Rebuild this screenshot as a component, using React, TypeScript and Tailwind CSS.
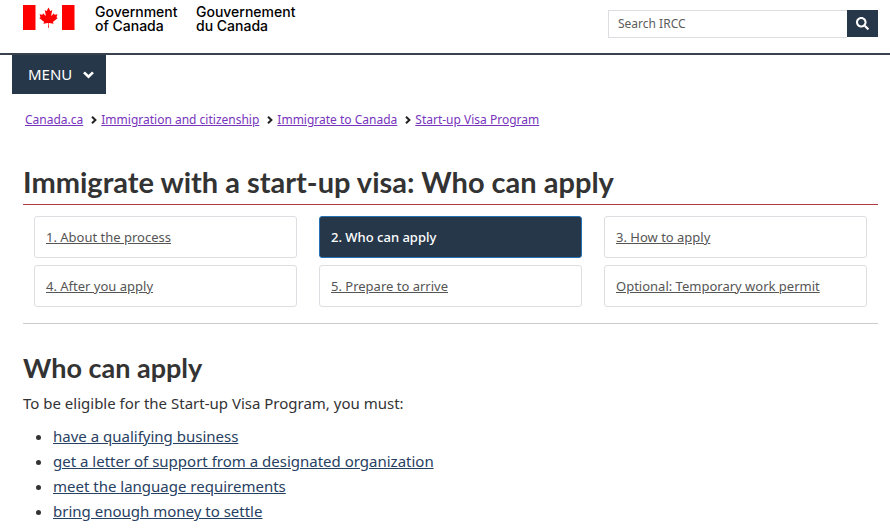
import { FaSearch } from 'react-icons/fa';

type Crumb = { label: string; href: string };
type Step = { label: string; href: string; active?: boolean };

const crumbs: Crumb[] = [
  { label: 'Canada.ca', href: '#home' },
  { label: 'Immigration and citizenship', href: '#immigration' },
  { label: 'Immigrate to Canada', href: '#immigrate' },
  { label: 'Start-up Visa Program', href: '#start-visa' },
];

const steps: Step[] = [
  { label: '1. About the process', href: '#about' },
  { label: '2. Who can apply', href: '#eligibility', active: true },
  { label: '3. How to apply', href: '#how-to-apply' },
  { label: '4. After you apply', href: '#after' },
  { label: '5. Prepare to arrive', href: '#arrive' },
  { label: 'Optional: Temporary work permit', href: '#work-permit' },
];

const requirements = [
  { label: 'have a qualifying business', href: '#business' },
  { label: 'get a letter of support from a designated organization', href: '#letter' },
  { label: 'meet the language requirements', href: '#language' },
  { label: 'bring enough money to settle', href: '#money' },
];

function Flag() {
  return (
    <svg width="52" height="25" viewBox="0 0 52 25" aria-hidden="true" className="shrink-0">
      <path fill="#f00" d="M0 0h12.5v25H0zM39 0h12.5v25H39z" />
      <path
        fill="#f00"
        transform="translate(25.5 12.6) scale(.005)"
        d="m-90 2030 45-863a95 95 0 0 0-111-98l-859 151 116-320a65 65 0 0 0-20-73l-941-762 212-99a65 65 0 0 0 34-79l-186-572 542 115a65 65 0 0 0 73-38l105-247 423 454a65 65 0 0 0 111-57l-204-1052 327 189a65 65 0 0 0 91-27l332-652 332 652a65 65 0 0 0 91 27l327-189-204 1052a65 65 0 0 0 111 57l423-454 105 247a65 65 0 0 0 73 38l542-115-186 572a65 65 0 0 0 34 79l212 99-941 762a65 65 0 0 0-20 73l116 320-859-151a95 95 0 0 0-111 98l45 863z"
      />
    </svg>
  );
}

function Header() {
  return (
    <header className="border-b-2 border-[#38414d]">
      <div className="flex items-start justify-between pt-1 pr-3 pb-[15px] pl-[23px]">
        <a href="#home" className="flex pt-px font-['Inter',sans-serif] text-[14px] leading-[14px] font-medium text-black">
          <Flag />
          <span className="ml-5 w-[101px]">
            Government
            <br />
            of Canada
          </span>
          <span lang="fr">
            Gouvernement
            <br />
            du Canada
          </span>
        </a>
        <form role="search" className="mt-[6px] flex" onSubmit={(e) => e.preventDefault()}>
          <input
            type="search"
            aria-label="Search IRCC"
            placeholder="Search IRCC"
            className="h-7 w-[239px] border border-r-0 border-[#dcdee1] px-[9px] pb-px text-[12px] leading-5 text-[#555] outline-none placeholder:text-[#5c5c5c]"
          />
          <button
            type="submit"
            aria-label="Search"
            className="flex h-[27px] w-[31px] items-center justify-center bg-[#26374a] text-white"
          >
            <FaSearch size={13} />
          </button>
        </form>
      </div>
    </header>
  );
}

function Breadcrumbs() {
  return (
    <nav aria-label="Breadcrumbs" className="mt-4 px-[25px]">
      <ol className="flex flex-wrap text-[12px] leading-5">
        {crumbs.map((crumb, i) => (
          <li key={crumb.href} className="flex items-center">
            {i > 0 && (
              <svg width="6" height="8" viewBox="0 0 6 8" aria-hidden="true" className="mr-1 ml-2">
                <path d="M1 .8 4.4 4 1 7.2" fill="none" stroke="#222" strokeWidth="2" />
              </svg>
            )}
            <a href={crumb.href} className="text-[#7834bc] underline">
              {crumb.label}
            </a>
          </li>
        ))}
      </ol>
    </nav>
  );
}

function Steps() {
  return (
    <ul className="grid grid-cols-3 gap-x-[22px] gap-y-[7px] border-b border-[#ccc] px-[11px] pt-[11px] pb-4">
      {steps.map((step) => (
        <li key={step.href}>
          <a
            href={step.href}
            aria-current={step.active ? 'page' : undefined}
            className={`block rounded-[3px] border px-[11px] py-[10px] text-[13px] leading-5 ${
              step.active
                ? 'border-[#2572b4] bg-[#26374a] font-medium text-white'
                : 'border-[#dcdee1] text-[#555] underline'
            }`}
          >
            {step.label}
          </a>
        </li>
      ))}
    </ul>
  );
}

export default function App() {
  return (
    <div className="bg-white font-['Noto_Sans',sans-serif] text-[#333]">
      <Header />

      <div className="px-3">
        <button type="button" className="flex h-[39px] items-center bg-[#26374a] pr-3 pl-4 text-[15px] text-white">
          MENU
          <svg width="11" height="8" viewBox="0 0 11 8" aria-hidden="true" className="ml-[11px]">
            <path d="M1 1.4 5.5 5.8 10 1.4" fill="none" stroke="currentColor" strokeWidth="2.6" />
          </svg>
        </button>
      </div>

      <Breadcrumbs />

      <main className="pr-3 pl-[23px]">
        <h1 className="mt-[34px] border-b border-[#af3c43] pb-1 font-['Lato',sans-serif] text-[29px] leading-9 font-bold">
          Immigrate with a start-up visa: Who can apply
        </h1>

        <Steps />

        <h2 className="mt-7 font-['Lato',sans-serif] text-[27px] leading-8 font-bold">Who can apply</h2>
        <p className="mt-[7px] text-[15px] leading-[25px]">To be eligible for the Start-up Visa Program, you must:</p>
        <ul className="mt-2 list-disc pl-[30px] text-[15px] leading-[25px]">
          {requirements.map((item) => (
            <li key={item.href}>
              <a href={item.href} className="text-[#284162] underline">
                {item.label}
              </a>
            </li>
          ))}
        </ul>
      </main>
    </div>
  );
}
